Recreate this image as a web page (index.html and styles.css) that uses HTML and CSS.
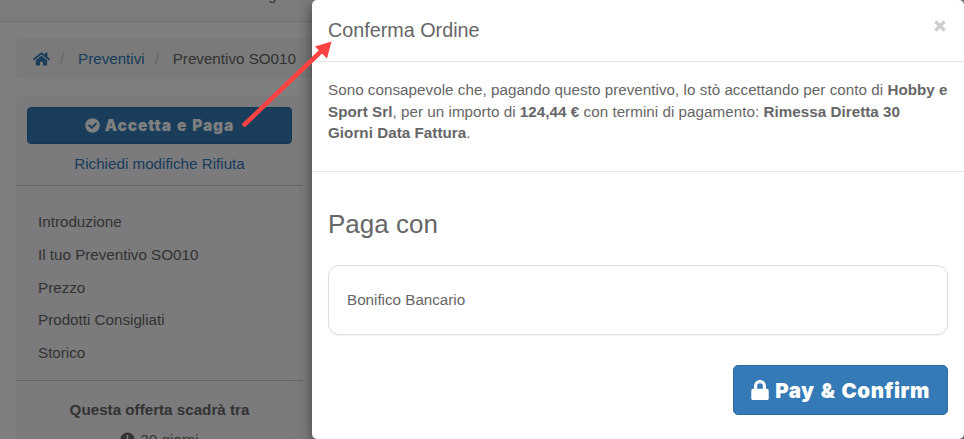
FILE: index.html
```html
<!DOCTYPE html>
<html lang="it">
<head>
<meta charset="utf-8">
<title>Conferma Ordine</title>
<link rel="stylesheet" href="styles.css">
</head>
<body>
<div class="page">
  <header class="topbar"><span>g</span></header>
  <nav class="breadcrumb">
    <svg class="home" viewBox="0 0 576 512"><path d="M280 148 96 300v164a16 16 0 0 0 16 16h112a16 16 0 0 0 16-16v-96a16 16 0 0 1 16-16h64a16 16 0 0 1 16 16v96a16 16 0 0 0 16 16h112a16 16 0 0 0 16-16V300L296 148a12 12 0 0 0-16 0zM572 251l-84-69V44a12 12 0 0 0-12-12h-56a12 12 0 0 0-12 12v72l-90-74a48 48 0 0 0-61 0L4 251a12 12 0 0 0-1 17l25 31a12 12 0 0 0 17 2L280 107a12 12 0 0 1 16 0l235 194a12 12 0 0 0 17-2l25-31a12 12 0 0 0-1-17z"/></svg>
    <span class="sep">/</span>
    <a class="link">Preventivi</a>
    <span class="sep">/</span>
    <span class="current">Preventivo SO010</span>
  </nav>
  <aside class="sidebar">
    <div class="actions">
      <button class="btn accept">
        <svg class="check" viewBox="0 0 16 16"><path fill-rule="evenodd" d="M8 .25a7.75 7.75 0 1 0 0 15.5A7.75 7.75 0 0 0 8 .25zM7.1 12.1 13 6.2 11.5 4.7 7.1 9.1 4.6 6.6 3.1 8.1z"/></svg>
        <span>Accetta e Paga</span>
      </button>
      <a class="link">Richiedi modifiche Rifiuta</a>
    </div>
    <ul class="menu">
      <li>Introduzione</li>
      <li>Il tuo Preventivo SO010</li>
      <li>Prezzo</li>
      <li>Prodotti Consigliati</li>
      <li>Storico</li>
    </ul>
    <div class="expiry">
      <strong>Questa offerta scadrà tra</strong>
      <div class="days">
        <svg class="clock" viewBox="0 0 16 16"><path fill-rule="evenodd" d="M8 .5a7.5 7.5 0 1 0 0 15 7.500 7.500 0 0 0 0-15zM7.1 3.2v5.4l3.3 2.2.9-1.3-2.5-1.7V3.2z"/></svg>
        <span>30 giorni</span>
      </div>
    </div>
  </aside>
</div>
<div class="backdrop"></div>
<section class="modal">
  <header class="modal-head">
    <h4>Conferma Ordine</h4>
    <svg class="close" viewBox="0 0 12 12"><path d="M2 2l8 8M10 2l-8 8"/></svg>
  </header>
  <p class="terms">Sono consapevole che, pagando questo preventivo, lo stò accettando per conto di <b>Hobby e<br>Sport Srl</b>, per un importo di <b>124,44 €</b> con termini di pagamento: <b>Rimessa Diretta 30<br>Giorni Data Fattura</b>.</p>
  <div class="payment">
    <h3>Paga con</h3>
    <div class="method">Bonifico Bancario</div>
    <button class="btn pay">
      <svg class="lock" viewBox="0 0 448 512"><path fill-rule="evenodd" d="M400 224h-24v-72C376 68 308 0 224 0S72 68 72 152v72H48a48 48 0 0 0-48 48v192a48 48 0 0 0 48 48h352a48 48 0 0 0 48-48V272a48 48 0 0 0-48-48zm-104 0H152v-72a72 72 0 0 1 144 0z"/></svg>
      <span>Pay &amp; Confirm</span>
    </button>
  </div>
</section>
<svg class="arrow" viewBox="0 0 110 110"><path class="shaft" d="M14.500 94.500 92 20.500"/><path class="tip" d="M101.500 11.500 85 16.500 97 28.500z"/></svg>
</body>
</html>
```
FILE: styles.css
```css
* { box-sizing: border-box; }
body {
  margin: 0;
  height: 439px;
  overflow: hidden;
  font: 15.200px/21.500px "Liberation Sans", Arial, sans-serif;
  color: #666;
  background: #fff;
}
.page { height: 439px; overflow: hidden; }
.topbar {
  display: flow-root;
  height: 22px;
  padding-left: 268px;
  background: #f8f8f8;
  border-bottom: 1px solid #dedede;
}
.topbar span { display: block; margin-top: -16px; }
.breadcrumb {
  display: flex;
  align-items: center;
  height: 39px;
  margin: 17px 16px 0;
  padding-left: 17px;
  border-radius: 4px;
  background: #f5f5f5;
}
.home { width: 17px; height: 16px; fill: #337ab7; }
.sep { width: 28px; padding-left: 10px; color: #ccc; }
.link { color: #337ab7; }
.current { color: #666; }
.sidebar {
  width: 287px;
  height: 400px;
  margin: 18px 0 0 16px;
  border-radius: 5px;
  background: #f7f7fa;
}
.actions {
  display: flex;
  flex-direction: column;
  align-items: center;
  height: 90px;
  padding: 11px 11px 0;
  border-bottom: 1px solid #ccccd0;
}
.btn {
  display: flex;
  align-items: center;
  justify-content: center;
  border: 1px solid #2e6da4;
  background: #337ab7;
  color: #fff;
  font-family: Inter, sans-serif;
  font-weight: 900;
}
.btn svg { fill: #fff; }
.accept {
  width: 265px;
  height: 37px;
  margin-bottom: 9px;
  gap: 5px;
  border-radius: 4px;
  font-size: 15.500px;
  letter-spacing: 0.900px;
  word-spacing: 1px;
}
.check { width: 15px; height: 15px; }
.menu {
  display: flex;
  flex-direction: column;
  gap: 11.300px;
  height: 195px;
  margin: 0;
  padding: 25px 22px 0;
  list-style: none;
  border-bottom: 1px solid #ccccd0;
}
.expiry { padding-top: 18px; text-align: center; }
.days { display: flex; justify-content: center; gap: 5px; margin-top: 8px; }
.clock { width: 15px; height: 15px; margin-top: 3px; fill: #666; }
.backdrop { position: absolute; inset: 0; background: rgba(0, 0, 0, 0.5); }
.modal {
  position: absolute;
  top: 0;
  left: 312px;
  width: 652px;
  height: 439px;
  border-radius: 5px;
  background: #fff;
  box-shadow: 0 5px 15px rgba(0, 0, 0, 0.5);
}
.modal-head {
  display: flex;
  align-items: center;
  justify-content: space-between;
  height: 62px;
  padding: 0 17px 0 16px;
  border-bottom: 1px solid #e5e5e5;
}
h4 { margin: 0; font-size: 19.750px; font-weight: 400; }
.close { width: 14px; height: 14px; margin-top: -9px; fill: none; stroke: #ccc; stroke-width: 2.800; }
.terms {
  height: 110px;
  margin: 0;
  padding: 17px 16px 0;
  white-space: nowrap;
  letter-spacing: 0.037px;
  border-bottom: 1px solid #e5e5e5;
}
.payment { display: flex; flex-direction: column; padding: 36px 16px 0; }
h3 { margin: 0 0 25px; font-size: 26px; line-height: 32px; font-weight: 400; }
.method {
  display: flex;
  align-items: center;
  height: 70px;
  padding-left: 18px;
  border: 1px solid #ddd;
  border-radius: 11px;
  box-shadow: 0 1px 1px rgba(0, 0, 0, 0.05);
}
.pay {
  align-self: flex-end;
  width: 215px;
  height: 50px;
  margin-top: 30px;
  gap: 6px;
  border-radius: 5px;
  font-size: 20.500px;
  letter-spacing: 0.500px;
  word-spacing: 1.500px;
}
.lock { width: 18px; height: 20px; }
.arrow { position: absolute; left: 230px; top: 30px; width: 110px; height: 110px; }
.shaft { stroke: #ff4242; stroke-width: 4.500; stroke-linecap: round; }
.tip { fill: #ff4242; }
```
